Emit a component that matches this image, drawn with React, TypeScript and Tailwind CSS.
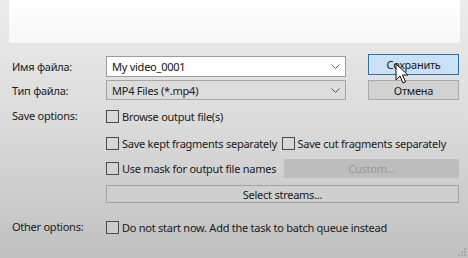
import React from "react";

function Checkbox() {
  return <span className="inline-block w-[13px] h-[13px] border border-[#4a4a4a] bg-[#d8d8d8]/40 shrink-0" />;
}

function Chevron() {
  return (
    <svg width="9" height="5" viewBox="0 0 9 5" className="shrink-0">
      <path d="M0.5 0.5 L4.5 4.5 L8.5 0.5" fill="none" stroke="#5a5a5a" strokeWidth="1" />
    </svg>
  );
}

export default function App() {
  return (
    <div
      className="relative w-[468px] h-[258px] overflow-hidden bg-gradient-to-b from-[#ececec] via-[#dadada] to-[#c0c0c0] text-[11px] tracking-[-0.25px] text-[#1a1a1a] leading-none whitespace-nowrap"
      style={{ fontFamily: '"Noto Sans", "Open Sans", sans-serif' }}
    >
      <div className="ml-[9px] mr-[8px] h-[43px] bg-gradient-to-b from-white to-[#f7f7f7]" />

      {/* Row 1 */}
      <div className="flex items-start mt-[11px] h-[23px]">
        <div className="w-[106px] pl-[12px] pt-[7px]">Имя файла:</div>
        <div className="mt-[2px] w-[240px] h-[21px] bg-white border border-[#9c9c9c] flex items-center pl-[5px] pr-[5px]">
          <span className="flex-1 text-[#111]">My video_0001</span>
          <Chevron />
        </div>
        <div className="ml-[22px] w-[91px] h-[21px] bg-[#c9e0f5] border border-[#2f6fa8] flex items-center justify-center">
          Сохранить
        </div>
      </div>

      {/* Row 2 */}
      <div className="flex items-start mt-[3px] h-[20px]">
        <div className="w-[106px] pl-[12px] pt-[5px]">Тип файла:</div>
        <div className="w-[240px] h-[20px] bg-[#dcdcdc] border border-[#a5a5a5] flex items-center pl-[5px] pr-[5px]">
          <span className="flex-1">MP4 Files (*.mp4)</span>
          <Chevron />
        </div>
        <div className="ml-[22px] w-[91px] h-[20px] bg-[#d2d2d2] border border-[#a8a8a8] flex items-center justify-center">
          Отмена
        </div>
      </div>

      {/* Row 3 */}
      <div className="flex items-center mt-[10px] h-[13px]">
        <div className="w-[106px] pl-[12px] -mt-[3px]">Save options:</div>
        <div className="flex items-center gap-[3px]">
          <Checkbox />
          <span>Browse output file(s)</span>
        </div>
      </div>

      {/* Row 4 */}
      <div className="flex items-center mt-[14px] h-[13px] pl-[106px]">
        <div className="flex items-center gap-[3px]">
          <Checkbox />
          <span>Save kept fragments separately</span>
        </div>
        <div className="flex items-center gap-[3px] ml-auto mr-[22px]">
          <Checkbox />
          <span>Save cut fragments separately</span>
        </div>
      </div>

      {/* Row 5 */}
      <div className="flex items-center mt-[9px] h-[19px] pl-[106px]">
        <div className="flex items-center gap-[3px]">
          <Checkbox />
          <span>Use mask for output file names</span>
        </div>
        <div className="ml-auto mr-[9px] w-[175px] h-[19px] bg-[#bdbdbd] flex items-center justify-center text-[#989898]">
          Custom...
        </div>
      </div>

      {/* Row 6 */}
      <div className="flex mt-[7px] pl-[106px] pr-[9px]">
        <div className="flex-1 h-[18px] bg-[#cfcfcf] border border-[#a2a2a2] flex items-center justify-center">
          Select streams...
        </div>
      </div>

      {/* Row 7 */}
      <div className="flex items-center mt-[18px] h-[13px]">
        <div className="w-[106px] pl-[12px] -mt-[3px]">Other options:</div>
        <div className="flex items-center gap-[3px]">
          <Checkbox />
          <span>Do not start now. Add the task to batch queue instead</span>
        </div>
      </div>

      {/* resize grip */}
      <svg className="absolute right-[2px] bottom-[2px]" width="8" height="8" viewBox="0 0 8 8">
        <rect x="6" y="0" width="2" height="2" fill="#a8a8a8" />
        <rect x="3" y="3" width="2" height="2" fill="#a8a8a8" />
        <rect x="6" y="3" width="2" height="2" fill="#a8a8a8" />
        <rect x="0" y="6" width="2" height="2" fill="#a8a8a8" />
        <rect x="3" y="6" width="2" height="2" fill="#a8a8a8" />
        <rect x="6" y="6" width="2" height="2" fill="#a8a8a8" />
      </svg>

      {/* mouse cursor */}
      <svg className="absolute left-[395px] top-[63px]" width="14" height="22" viewBox="0 0 14 22">
        <path
          d="M1 1 L1 17 L5 13 L8 20 L10.5 19 L7.5 12 L13 12 Z"
          fill="white"
          stroke="#111"
          strokeWidth="1"
          strokeLinejoin="round"
        />
      </svg>
    </div>
  );
}
